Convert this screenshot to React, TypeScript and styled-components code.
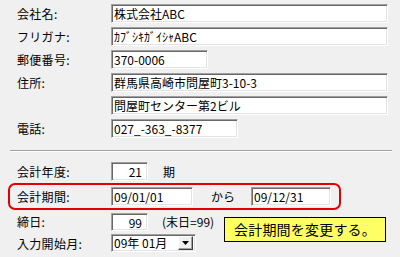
import React from 'react';
import styled, { createGlobalStyle } from 'styled-components';

const GlobalStyle = createGlobalStyle`
    html, body {
        margin: 0;
        padding: 0;
        background: #f0f0f0;
    }
    body {
        font-family: "Noto Sans CJK JP", "Liberation Sans", sans-serif;
        font-size: 12px;
        color: #000;
    }
`

const rows = [
    { label: "会社名:", value: "株式会社ABC", width: 277 },
    { label: "フリガナ:", value: "ｶﾌﾞｼｷｶﾞｲｼｬABC", width: 277 },
    { label: "郵便番号:", value: "370-0006", width: 97 },
    { label: "住所:", value: "群馬県高崎市問屋町3-10-3", width: 277 },
    { label: "", value: "問屋町センター第2ビル", width: 277 },
    { label: "電話:", value: "027_-363_-8377", width: 127 },
]

export default function App() {
    return (
        <Page>
            <GlobalStyle />
            <Upper>
                {rows.map((r, i) => (
                    <Row key={i}>
                        <Label>{r.label}</Label>
                        <TextBox width={r.width}>{r.value}</TextBox>
                    </Row>
                ))}
            </Upper>
            <Separator />
            <Lower>
                <Row>
                    <Label>会計年度:</Label>
                    <TextBox width={37} $right>21</TextBox>
                    <After gap={15}>期</After>
                </Row>
                <Highlight>
                    <Label>会計期間:</Label>
                    <TextBox width={82}>09/01/01</TextBox>
                    <After gap={18}>から</After>
                    <TextBox width={80} style={{ marginLeft: 16 }}>09/12/31</TextBox>
                </Highlight>
                <Row>
                    <Label>締日:</Label>
                    <TextBox width={37} $right>99</TextBox>
                    <After gap={14}>(末日=99)</After>
                </Row>
                <Row>
                    <Label>入力開始月:</Label>
                    <Select>
                        <SelectText>09年 01月</SelectText>
                        <DropButton>
                            <svg width="7" height="4" viewBox="0 0 7 4">
                                <path d="M0 0 H7 L3.5 4 Z" fill="#000" />
                            </svg>
                        </DropButton>
                    </Select>
                </Row>
                <Tooltip>会計期間を変更する。</Tooltip>
            </Lower>
        </Page>
    )
}

const Page = styled.div`
    width: 400px;
    height: 257px;
    overflow: hidden;
    position: relative;
    box-sizing: border-box;
    padding: 4px 0 0 17px;
`

const Upper = styled.div`
    display: flex;
    flex-direction: column;
    gap: 4.2px;
`

const Row = styled.div`
    display: flex;
    align-items: center;
    height: 18.8px;
`

const Label = styled.div`
    width: 94px;
    flex: none;
    white-space: nowrap;
    letter-spacing: 0.3px;
`

const TextBox = styled.div<{ width: number, $right?: boolean }>`
    box-sizing: border-box;
    width: ${props => props.width}px;
    height: 18.8px;
    flex: none;
    background: #fff;
    border-top: 1px solid #a0a0a0;
    border-left: 1px solid #a0a0a0;
    border-right: 1px solid #fff;
    border-bottom: 1px solid #fff;
    box-shadow: inset 1px 1px 0 #696969, inset -1px -1px 0 #e3e3e3;
    padding: 0 ${props => props.$right ? 5 : 1}px 0 2px;
    line-height: 17px;
    text-align: ${props => props.$right ? "right" : "left"};
    white-space: nowrap;
    overflow: hidden;
`

const After = styled.span<{ gap: number }>`
    margin-left: ${props => props.gap}px;
    white-space: nowrap;
`

const Separator = styled.div`
    height: 1px;
    background: #a0a0a0;
    border-bottom: 1px solid #fff;
    margin: 12px 8px 10px -7px;
`

const Lower = styled.div`
    display: flex;
    flex-direction: column;
    gap: 2.5px;
`

const Highlight = styled.div`
    display: flex;
    align-items: center;
    box-sizing: border-box;
    width: 333px;
    height: 27px;
    margin-left: -9px;
    padding-left: 7px;
    border: 2px solid #e00000;
    border-radius: 7px;
`

const Select = styled.div`
    box-sizing: border-box;
    width: 85px;
    height: 18px;
    display: flex;
    align-items: center;
    background: #fff;
    border-top: 1px solid #a0a0a0;
    border-left: 1px solid #a0a0a0;
    border-right: 1px solid #fff;
    border-bottom: 1px solid #fff;
    box-shadow: inset 1px 1px 0 #696969, inset -1px -1px 0 #e3e3e3;
    padding: 2px;
`

const SelectText = styled.div`
    flex: 1;
    white-space: nowrap;
    line-height: 14px;
`

const DropButton = styled.div`
    box-sizing: border-box;
    width: 15px;
    height: 14px;
    display: flex;
    align-items: center;
    justify-content: center;
    background: #f0f0f0;
    border-top: 1px solid #fff;
    border-left: 1px solid #fff;
    border-right: 1px solid #404040;
    border-bottom: 1px solid #404040;
    box-shadow: inset -1px -1px 0 #a0a0a0;
`

const Tooltip = styled.div`
    position: absolute;
    left: 224px;
    top: 217px;
    box-sizing: border-box;
    width: 162px;
    height: 25px;
    background: #ffff66;
    border: 1px solid #000;
    font-size: 14px;
    line-height: 22px;
    text-align: center;
    letter-spacing: 0.2px;
`
